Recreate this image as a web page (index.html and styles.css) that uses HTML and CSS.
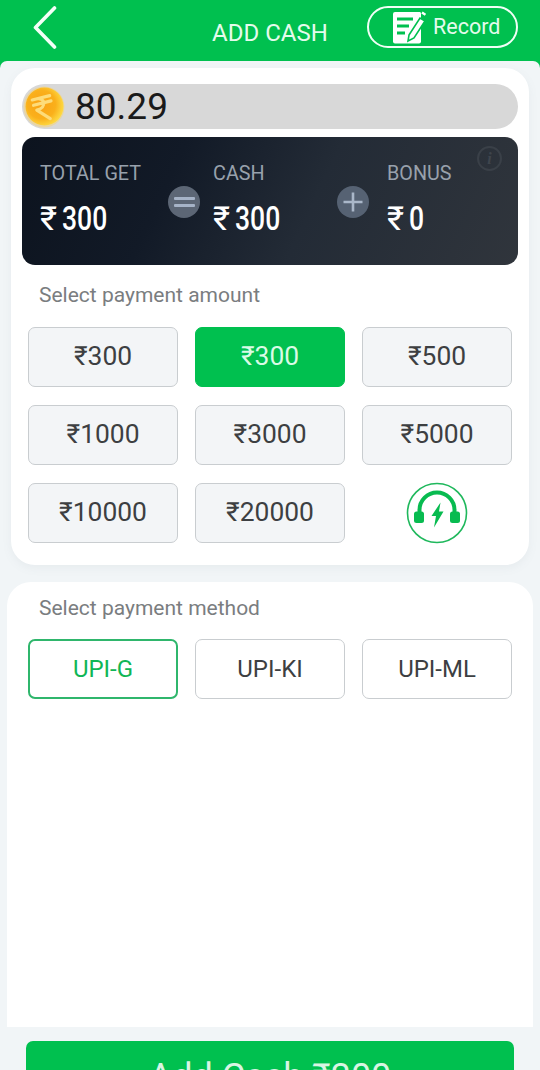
FILE: index.html
```html
<!DOCTYPE html>
<html lang="en">
<head>
<meta charset="utf-8">
<title>Add Cash</title>
<link rel="stylesheet" href="styles.css">
</head>
<body>
<div class="page">
  <header class="header">
    <svg class="back" viewBox="0 0 26 44" width="26" height="44"><path d="M22.500 3 L3.500 22.500 L22.500 42" fill="none" stroke="#f4fff8" stroke-width="3.600" stroke-linecap="round" stroke-linejoin="round"/></svg>
    <div class="title">ADD CASH</div>
    <div class="record">
      <svg class="record-icon" viewBox="0 0 34 36" width="34" height="36">
        <path d="M1 5 a2 2 0 0 1 2-2 h25 a2 2 0 0 1 1 1.500 v28 a2 2 0 0 1-2 2 h-24 a2 2 0 0 1-2-2 Z" fill="#fff"/>
        <path d="M5 10h16M5 17h12M5 24h8" stroke="#00c04f" stroke-width="2.800" fill="none"/>
        <path d="M17 26 L28 9 L33 12 L22 29 L16 32 Z" fill="#fff" stroke="#00c04f" stroke-width="1.600"/>
        <path d="M30 3.500 L33.500 5.800" stroke="#fff" stroke-width="2.500"/>
      </svg>
      <span class="record-text">Record</span>
    </div>
  </header>

  <main class="content">
    <section class="card amount-card">
      <div class="balance">
        <svg class="coin" viewBox="0 0 42 42" width="42" height="42">
          <defs>
            <radialGradient id="coinFill" cx="42%" cy="45%" r="62%">
              <stop offset="0" stop-color="#f9a216"/>
              <stop offset="0.6" stop-color="#fab01b"/>
              <stop offset="1" stop-color="#fee14a"/>
            </radialGradient>
          </defs>
          <circle cx="21" cy="21" r="20.500" fill="#e8d5a4"/>
          <circle cx="21.500" cy="20.500" r="19" fill="url(#coinFill)"/>
          <g transform="rotate(-14 20 20)">
            <path d="M11 11.500h18M11 17h18M15 11.500c9 0 9 11-2 11l11 11.500" fill="none" stroke="#fddc7a" stroke-width="3.200" stroke-linejoin="round" stroke-linecap="round"/>
          </g>
        </svg>
        <span class="balance-value">80.29</span>
      </div>

      <div class="summary">
        <div class="summary-col col-total">
          <div class="summary-label">TOTAL GET</div>
          <div class="summary-value"><span class="cur">₹</span><span class="num">300</span></div>
        </div>
        <div class="op op-eq"><span class="bar"></span><span class="bar"></span></div>
        <div class="summary-col col-cash">
          <div class="summary-label">CASH</div>
          <div class="summary-value"><span class="cur">₹</span><span class="num">300</span></div>
        </div>
        <div class="op op-plus">
          <svg viewBox="0 0 32 32" width="32" height="32"><path d="M16 6.500v19M6.500 16h19" stroke="#aab7c9" stroke-width="2.600" fill="none"/></svg>
        </div>
        <div class="summary-col col-bonus">
          <div class="summary-label">BONUS</div>
          <div class="summary-value"><span class="cur">₹</span><span class="num">0</span></div>
        </div>
        <div class="info">i</div>
      </div>

      <div class="section-label">Select payment amount</div>
      <div class="grid">
        <div class="opt">₹300</div>
        <div class="opt opt-active">₹300</div>
        <div class="opt">₹500</div>
        <div class="opt">₹1000</div>
        <div class="opt">₹3000</div>
        <div class="opt">₹5000</div>
        <div class="opt">₹10000</div>
        <div class="opt">₹20000</div>
        <div class="support">
          <svg viewBox="0 0 62 62" width="62" height="62">
            <circle cx="31" cy="31" r="29.500" fill="#fff" stroke="#1fb85c" stroke-width="1.600"/>
            <path d="M13.500 31v-3a17.500 17.500 0 0 1 35 0v3" fill="none" stroke="#08bb50" stroke-width="4"/>
            <rect x="8" y="29.500" width="10" height="11.500" rx="2.500" fill="#08bb50"/>
            <rect x="44" y="29.500" width="10" height="11.500" rx="2.500" fill="#08bb50"/>
            <path d="M34.500 20.500 L25.500 34 H30 L28 45.500 L37.500 29.500 H33 Z" fill="#08bb50"/>
          </svg>
        </div>
      </div>
    </section>

    <section class="card method-card">
      <div class="section-label">Select payment method</div>
      <div class="grid">
        <div class="opt opt-plain opt-selected">UPI-G</div>
        <div class="opt opt-plain">UPI-KI</div>
        <div class="opt opt-plain">UPI-ML</div>
      </div>
    </section>

    <div class="submit">Add Cash ₹300</div>
  </main>
</div>
</body>
</html>
```
FILE: styles.css
```css
* { box-sizing: border-box; }
html, body { margin: 0; padding: 0; }
body {
  width: 540px;
  height: 1070px;
  overflow: hidden;
  font-family: Roboto, "Noto Sans", sans-serif;
  background: #00c04f;
}
.page { width: 540px; height: 1070px; overflow: hidden; }

.header {
  height: 61px;
  background: #00c04f;
  display: flex;
  align-items: flex-start;
  position: relative;
}
.back { margin: 5px 0 0 32px; flex: none; }
.title {
  position: absolute;
  left: 0;
  right: 0;
  top: 19px;
  text-align: center;
  color: #e4fbec;
  font-size: 24px;
  line-height: 28px;
}
.record {
  position: absolute;
  left: 367px;
  top: 6px;
  width: 151px;
  height: 42px;
  border: 2px solid #f0fff6;
  border-radius: 21px;
  display: flex;
  align-items: center;
  padding-left: 23px;
  color: #e4fbec;
}
.record-icon { flex: none; }
.record-text { font-size: 21.500px; margin-left: 7px; margin-top: -2px; }

.content {
  height: 1009px;
  background: #f1f5f7;
  border-radius: 7px 7px 0 0;
  padding-top: 7px;
}
.card { background: #fff; }
.amount-card {
  width: 518px;
  height: 497px;
  margin-left: 11px;
  border-radius: 24px;
  padding: 16px 11px 0;
  box-shadow: 0 3px 10px rgba(120, 130, 140, 0.08);
}
.balance {
  height: 45px;
  background: #d8d8d8;
  border-radius: 23px;
  display: flex;
  align-items: center;
}
.coin { flex: none; margin-left: 1px; }
.balance-value { font-size: 37px; color: #1a1a1a; margin-left: 10px; line-height: 49px; }

.summary {
  position: relative;
  height: 128px;
  margin-top: 8px;
  border-radius: 13px;
  background: linear-gradient(115deg, #0c131e 0%, #121a27 30%, #232b36 58%, #30353c 100%);
  display: flex;
  padding: 26px 0 0 18px;
}
.summary-col { flex: none; }
.col-total { width: 127px; }
.col-cash { width: 124px; }
.col-bonus { width: 100px; }
.summary-label { font-size: 19.800px; line-height: 22px; color: #98a1ac; }
.summary-value {
  display: flex;
  align-items: baseline;
  line-height: 36px;
  margin-top: 15px;
  color: #fff;
  white-space: nowrap;
}
.cur { flex: none; width: 22px; font-size: 33px; }
.num {
  font-size: 34px;
  font-weight: 500;
  transform-origin: left center;
  transform: scaleX(0.78);
}
.op {
  flex: none;
  width: 32px;
  height: 32px;
  border-radius: 50%;
  background: #5c6675;
  margin-top: 23px;
  margin-right: 13px;
  display: flex;
  flex-direction: column;
  align-items: center;
  justify-content: center;
  gap: 4px;
}
.op-eq { margin-left: 1px; }
.op-plus { margin-left: 0; margin-right: 18px; background: #566273; }
.bar { width: 21px; height: 3px; background: #a6b3c7; border-radius: 1px; }
.info {
  position: absolute;
  right: 16px;
  top: 9px;
  width: 25px;
  height: 25px;
  border: 2px solid #3a4048;
  border-radius: 50%;
  color: #3f454d;
  font: italic 700 16px/21px "Liberation Serif", serif;
  text-align: center;
}

.section-label {
  color: #7a7d80;
  font-size: 21px;
  line-height: 24px;
}
.amount-card .section-label { margin: 18px 0 0 17px; }
.grid {
  display: grid;
  grid-template-columns: repeat(3, 150px);
  column-gap: 17px;
  row-gap: 18px;
}
.amount-card .grid { margin: 20px 0 0 6px; grid-auto-rows: 60px; }
.opt {
  height: 60px;
  border: 1.500px solid #c9cdd0;
  border-radius: 7px;
  background: #f3f5f7;
  color: #3d3f42;
  font-size: 26.400px;
  padding-bottom: 2px;
  display: flex;
  align-items: center;
  justify-content: center;
}
.opt-active { background: #00c04f; border-color: #00c04f; color: #d9fbe6; }
.opt-plain { background: #fff; font-size: 24px; padding-bottom: 0; }
.opt-selected { border: 2px solid #2fb66c; color: #10b655; }
.support { display: flex; align-items: center; justify-content: center; }

.method-card {
  width: 526px;
  height: 445px;
  margin: 17px 0 0 7px;
  border-radius: 24px 24px 0 0;
  padding: 14px 21px 0;
}
.method-card .section-label { margin-left: 11px; }
.method-card .grid { margin-top: 19px; }

.submit {
  width: 488px;
  height: 60px;
  margin: 14px 0 0 26px;
  background: #00c04f;
  border-radius: 7px;
  color: #d8f5e3;
  font-size: 36px;
  line-height: 60px;
  text-align: center;
  padding-top: 6px;
  white-space: nowrap;
}
```
